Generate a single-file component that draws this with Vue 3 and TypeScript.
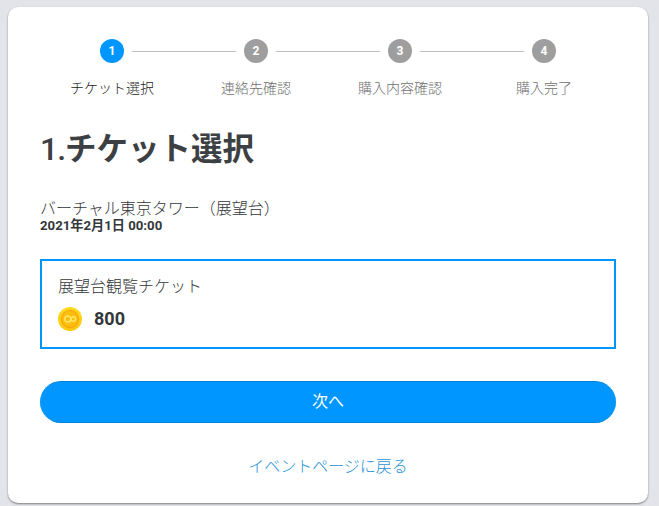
<script setup lang="ts">
interface Step {
  no: number
  label: string
}
const steps: Step[] = [
  { no: 1, label: 'チケット選択' },
  { no: 2, label: '連絡先確認' },
  { no: 3, label: '購入内容確認' },
  { no: 4, label: '購入完了' },
]
</script>

<template>
  <div class="page">
    <main class="card">
      <ol class="stepper">
        <li v-for="(s, i) in steps" :key="s.no" class="step" :class="{ active: i === 0 }">
          <span class="dot">{{ s.no }}</span>
          <span class="step-label">{{ s.label }}</span>
        </li>
      </ol>

      <h1 class="title"><span class="title-no">1.</span>チケット選択</h1>

      <div class="event">
        <p class="event-name">バーチャル東京タワー（展望台）</p>
        <p class="event-date">2021年2月1日 00:00</p>
      </div>

      <section class="ticket">
        <p class="ticket-name">展望台観覧チケット</p>
        <div class="price">
          <svg class="coin" viewBox="0 0 24 24" width="24" height="24" aria-hidden="true">
            <defs>
              <linearGradient id="coinRim" x1="0" y1="0" x2="0" y2="1">
                <stop offset="0" stop-color="#ffdc1e" />
                <stop offset="1" stop-color="#fec70e" />
              </linearGradient>
            </defs>
            <circle cx="12" cy="12" r="12" fill="url(#coinRim)" />
            <circle cx="12" cy="12" r="8.6" fill="#fdbd0f" stroke="#f9a90c" stroke-width="1.3" />
            <circle cx="9.8" cy="12" r="3" fill="none" stroke="#ffe666" stroke-width="1.6" />
            <circle cx="15.4" cy="12" r="2.2" fill="none" stroke="#ffe666" stroke-width="1.4" />
          </svg>
          <span class="amount">800</span>
        </div>
      </section>

      <button class="next" type="button">次へ</button>
      <a class="back" href="#" @click.prevent>イベントページに戻る</a>
    </main>
  </div>
</template>

<style>
html,
body {
  margin: 0;
  background: #e3e4ea;
}
</style>

<style scoped>
.page {
  height: 506px;
  padding: 7px 11px 3px 8px;
  box-sizing: border-box;
  font-family: Roboto, "Noto Sans CJK JP", sans-serif;
  color: #33373a;
}
.card {
  height: 496px;
  box-sizing: border-box;
  padding: 32px 32px 0;
  background: #fff;
  border-radius: 10px;
  box-shadow: 0 1px 2px rgba(0, 0, 0, 0.45);
  display: flex;
  flex-direction: column;
}
.stepper {
  list-style: none;
  margin: 0;
  padding: 0;
  display: grid;
  grid-template-columns: repeat(4, 1fr);
}
.step {
  position: relative;
  display: flex;
  flex-direction: column;
  align-items: center;
  gap: 15px;
}
.step:not(:last-child)::after {
  content: "";
  position: absolute;
  top: 12px;
  left: calc(50% + 20px);
  width: 104px;
  height: 1px;
  background: #bdbdbd;
}
.dot {
  width: 24px;
  height: 24px;
  border-radius: 50%;
  background: #9e9e9e;
  color: #fff;
  font-size: 12px;
  font-weight: 700;
  line-height: 24px;
  text-align: center;
}
.step.active .dot {
  background: #0096ff;
}
.step-label {
  font-size: 14px;
  line-height: 20px;
  color: #6f6f6f;
  font-weight: 300;
}
.step.active .step-label {
  color: #1a1a1a;
}
.title {
  margin: 29px 0 0;
  height: 44px;
  font-size: 31.5px;
  line-height: 44px;
  font-weight: 700;
  color: #3c4043;
}
.title-no {
  font-size: 32px;
  font-weight: 500;
  letter-spacing: -1px;
}
.event {
  margin-top: 28px;
}
.event-name {
  margin: 0;
  font-size: 16px;
  line-height: 20px;
  font-weight: 300;
}
.event-date {
  margin: -1px 0 0;
  font-size: 13.2px;
  line-height: 16px;
  font-weight: 700;
}
.ticket {
  margin-top: 25px;
  height: 90px;
  box-sizing: border-box;
  border: 2px solid #0096ff;
  padding: 14px 16px 0;
}
.ticket-name {
  margin: 0;
  font-size: 16px;
  line-height: 24px;
  font-weight: 300;
}
.price {
  margin-top: 8px;
  display: flex;
  align-items: center;
  gap: 12px;
}
.coin {
  display: block;
}
.amount {
  font-size: 18px;
  font-weight: 700;
  line-height: 24px;
}
.next {
  margin-top: 32px;
  height: 42px;
  border: 0;
  border-bottom: 1px solid #0082dc;
  border-top: 1px solid #0082dc;
  border-radius: 21px;
  background: #0096ff;
  color: #fff;
  font-family: inherit;
  font-size: 16px;
  font-weight: 400;
  padding: 0 0 4px;
}
.back {
  margin-top: 32px;
  align-self: center;
  font-size: 16px;
  line-height: 24px;
  font-weight: 300;
  color: #2b93d6;
  text-decoration: none;
}
</style>
